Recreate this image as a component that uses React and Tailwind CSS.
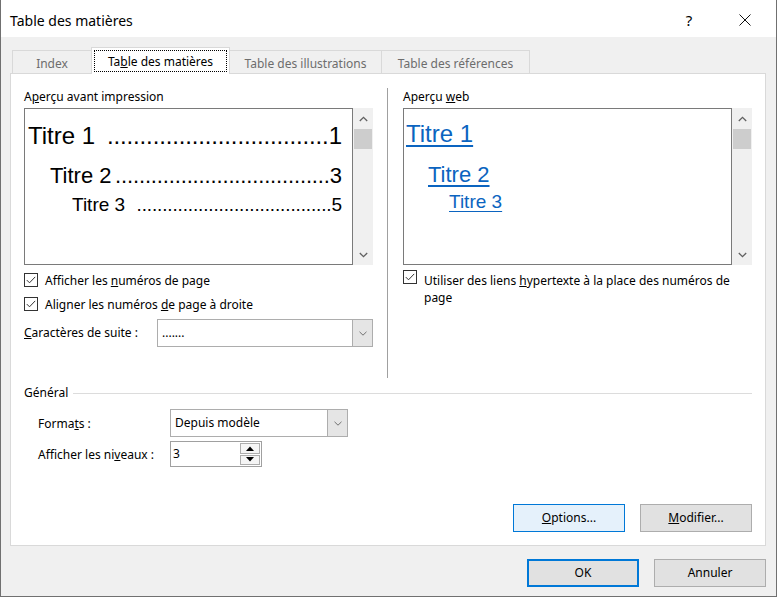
import React from "react";

const ui = "font-['Noto_Sans',sans-serif]";
const arial = "font-['Liberation_Sans',Arial,sans-serif]";

function Check() {
  return (
    <span className="flex h-[14px] w-[14px] shrink-0 items-center justify-center border border-[#333333] bg-white">
      <svg width="12" height="12" viewBox="0 0 12 12">
        <path d="M1.8 6.1 L4.5 8.8 L10.2 2.9" fill="none" stroke="#333333" strokeWidth="1" />
      </svg>
    </span>
  );
}

function Chevron({ up }) {
  return (
    <svg width="9" height="6" viewBox="0 0 9 6">
      <path
        d={up ? "M0.8 5 L4.5 1.3 L8.2 5" : "M0.8 1 L4.5 4.7 L8.2 1"}
        fill="none"
        stroke="#606060"
        strokeWidth="1.3"
      />
    </svg>
  );
}

function ScrollBar() {
  return (
    <div className="flex h-[157px] w-[20px] flex-col bg-[#f0f0f0]">
      <div className="flex h-[21px] items-center justify-center">
        <Chevron up />
      </div>
      <div className="mx-[1px] h-[20px] bg-[#cdcdcd]" />
      <div className="flex-1" />
      <div className="flex h-[20px] items-center justify-center">
        <Chevron />
      </div>
    </div>
  );
}

function Combo({ width, value }) {
  return (
    <div className={`flex h-[28px] ${width} border border-[#adadad] bg-white`}>
      <div className="flex flex-1 items-center pl-[4px] text-[12px] text-black">{value}</div>
      <div className="flex w-[20px] items-center justify-center border-l border-[#adadad] bg-[#e5e5e5]">
        <svg width="8" height="5" viewBox="0 0 8 5">
          <path d="M0.5 0.8 L4 4.2 L7.5 0.8" fill="none" stroke="#707070" strokeWidth="1" />
        </svg>
      </div>
    </div>
  );
}

// one line of the print preview: label, dot leader, page number
function Leader({ label, num, dots, size, indent }) {
  return (
    <div className={`flex items-baseline whitespace-nowrap ${size} ${indent}`}>
      <span className="shrink-0">{label}</span>
      <span className="flex flex-1 justify-end tracking-[-0.15px]">{".".repeat(dots)}</span>
      <span className="shrink-0">{num}</span>
    </div>
  );
}

function Button({ children, kind }) {
  const styles = {
    focus: "border border-[#0078d7] bg-[#e5f1fb]",
    def: "border-2 border-[#0078d7] bg-[#e1e1e1]",
    plain: "border border-[#adadad] bg-[#e1e1e1]",
  };
  return (
    <div className={`flex h-[28px] w-[112px] items-center justify-center text-[12px] text-black ${styles[kind]}`}>
      {children}
    </div>
  );
}

export default function App() {
  return (
    <div className={`h-[598px] w-[777px] bg-white ${ui}`}>
      <div className="flex h-[597px] flex-col border-x border-b border-[#707070]">
        {/* title bar */}
        <div className="flex h-[37px] items-center bg-white pl-[9px] pt-[3px]">
          <span className="text-[14px] text-black">Table des matières</span>
          <span className="ml-auto w-[30px] text-center text-[15px] text-black">?</span>
          <span className="ml-[18px] mr-[8px] flex w-[46px] items-center justify-center">
            <svg width="12" height="12" viewBox="0 0 12 12">
              <path d="M0.5 0.5 L11.5 11.5 M11.5 0.5 L0.5 11.5" stroke="#111" strokeWidth="1" />
            </svg>
          </span>
        </div>

        <div className="flex flex-1 flex-col bg-[#f0f0f0] pl-[9px] pr-[10px] pt-[10px]">
          {/* tabs */}
          <div className="relative z-10 flex h-[26px] items-end pl-[2px] text-[12px]">
            <div className="flex h-[23px] w-[79px] items-center justify-center border-l border-t border-[#d9d9d9] pt-[3px] text-[#6d6d6d]">
              Index
            </div>
            <div className="mb-[-1px] flex h-[27px] w-[139px] flex-col border-x border-t border-[#d9d9d9] bg-white px-[2px] pt-[2px]">
              <div className="flex h-[22px] items-center justify-center border border-dotted border-black pt-[2px] text-black">
                Ta<u>b</u>le des matières
              </div>
            </div>
            <div className="flex h-[23px] w-[152px] items-center justify-center border-r border-t border-[#d9d9d9] pt-[3px] text-[#6d6d6d]">
              Table des illustrations
            </div>
            <div className="flex h-[23px] w-[148px] items-center justify-center border-r border-t border-[#d9d9d9] pt-[3px] text-[#6d6d6d]">
              Table des références
            </div>
          </div>

          {/* panel */}
          <div className="flex h-[473px] w-[756px] flex-col border border-[#d9d9d9] bg-white pl-[13px] pr-[13px] text-[12px] text-black">
            <div className="flex pt-[14px]">
              {/* left column */}
              <div className="mt-[1px] w-[349px]">
                <div className="h-[16px] leading-[16px]">
                  A<u>p</u>erçu avant impression
                </div>
                <div className="mt-[3px] flex">
                  <div className={`h-[157px] w-[329px] border border-[#7a7a7a] bg-white pl-[3px] pr-[10px] text-black ${arial}`}>
                    <div className="mt-[15px]">
                      <Leader label="Titre 1" num="1" dots={34} size="text-[24px] leading-[24px]" indent="" />
                    </div>
                    <div className="mt-[17px]">
                      <Leader label="Titre 2" num="3" dots={36} size="text-[22px] leading-[22px]" indent="pl-[22px]" />
                    </div>
                    <div className="mt-[8px]">
                      <Leader label="Titre 3" num="5" dots={38} size="text-[19px] leading-[19px]" indent="pl-[44px]" />
                    </div>
                  </div>
                  <ScrollBar />
                </div>
                <div className="mt-[7px] flex h-[16px] items-center gap-[7px]">
                  <Check />
                  <span className="pt-[1px] leading-[16px]">
                    Afficher les <u>n</u>uméros de page
                  </span>
                </div>
                <div className="mt-[8px] flex h-[16px] items-center gap-[7px]">
                  <Check />
                  <span className="pt-[1px] leading-[16px]">
                    Aligner les numéros <u>d</u>e page à droite
                  </span>
                </div>
                <div className="mt-[7px] flex h-[28px] items-center">
                  <span className="w-[133px]">
                    <u>C</u>aractères de suite :
                  </span>
                  <Combo width="w-[216px]" value="......." />
                </div>
              </div>

              <div className="ml-[14px] h-[290px] w-px bg-[#a0a0a0]" />

              {/* right column */}
              <div className="ml-[15px] mt-[1px] w-[349px]">
                <div className="h-[16px] leading-[16px]">
                  Aperçu <u>w</u>eb
                </div>
                <div className="mt-[3px] flex">
                  <div className={`h-[157px] w-[329px] border border-[#7a7a7a] bg-white text-[#0b64c0] ${arial}`}>
                    <div className="mt-[13px] pl-[2px] text-[24px] leading-[24px]">
                      <span className="underline underline-offset-[3px]">Titre 1</span>
                    </div>
                    <div className="mt-[18px] pl-[24px] text-[22px] leading-[22px]">
                      <span className="underline underline-offset-[3px]">Titre 2</span>
                    </div>
                    <div className="mt-[6px] pl-[45px] text-[19px] leading-[19px]">
                      <span className="underline underline-offset-[3px]">Titre 3</span>
                    </div>
                  </div>
                  <ScrollBar />
                </div>
                <div className="mt-[5px] flex items-start gap-[7px]">
                  <Check />
                  <span className="mt-[2px] whitespace-nowrap leading-[17px]">
                    Utiliser des liens <u>h</u>ypertexte à la place des numéros de
                    <br />
                    page
                  </span>
                </div>
              </div>
            </div>

            {/* général */}
            <div className="mt-[7px] flex h-[16px] w-[728px] items-center">
              <span className="leading-[16px]">Général</span>
              <div className="ml-[5px] h-px flex-1 bg-[#dcdcdc]" />
            </div>
            <div className="mt-[8px] flex h-[28px] items-center pl-[14px]">
              <span className="w-[132px] pt-[1px]">
                Forma<u>t</u>s :
              </span>
              <Combo width="w-[178px]" value="Depuis modèle" />
            </div>
            <div className="mt-[4px] flex h-[26px] items-center pl-[14px]">
              <span className="w-[132px] pt-[1px]">
                Afficher les ni<u>v</u>eaux :
              </span>
              <div className="flex h-[26px] w-[92px] border border-[#a0a0a0] bg-white">
                <div className="flex flex-1 items-center pl-[2px]">3</div>
                <div className="flex w-[21px] flex-col gap-[1px] py-[1px] pr-[1px]">
                  <div className="flex flex-1 items-center justify-center border border-[#adadad] bg-[#f5f5f5]">
                    <svg width="8" height="5" viewBox="0 0 8 5">
                      <path d="M0 5 L4 0.5 L8 5 Z" fill="#000" />
                    </svg>
                  </div>
                  <div className="flex flex-1 items-center justify-center border border-[#adadad] bg-[#f5f5f5]">
                    <svg width="8" height="5" viewBox="0 0 8 5">
                      <path d="M0 0 L4 4.5 L8 0 Z" fill="#000" />
                    </svg>
                  </div>
                </div>
              </div>
            </div>

            <div className="mb-[13px] mt-auto flex justify-end gap-[15px]">
              <Button kind="focus">
                <span>
                  <u>O</u>ptions...
                </span>
              </Button>
              <Button kind="plain">
                <span>
                  <u>M</u>odifier...
                </span>
              </Button>
            </div>
          </div>

          {/* dialog buttons */}
          <div className="mt-[13px] flex justify-end gap-[15px]">
            <Button kind="def">OK</Button>
            <Button kind="plain">Annuler</Button>
          </div>
        </div>
      </div>
    </div>
  );
}
